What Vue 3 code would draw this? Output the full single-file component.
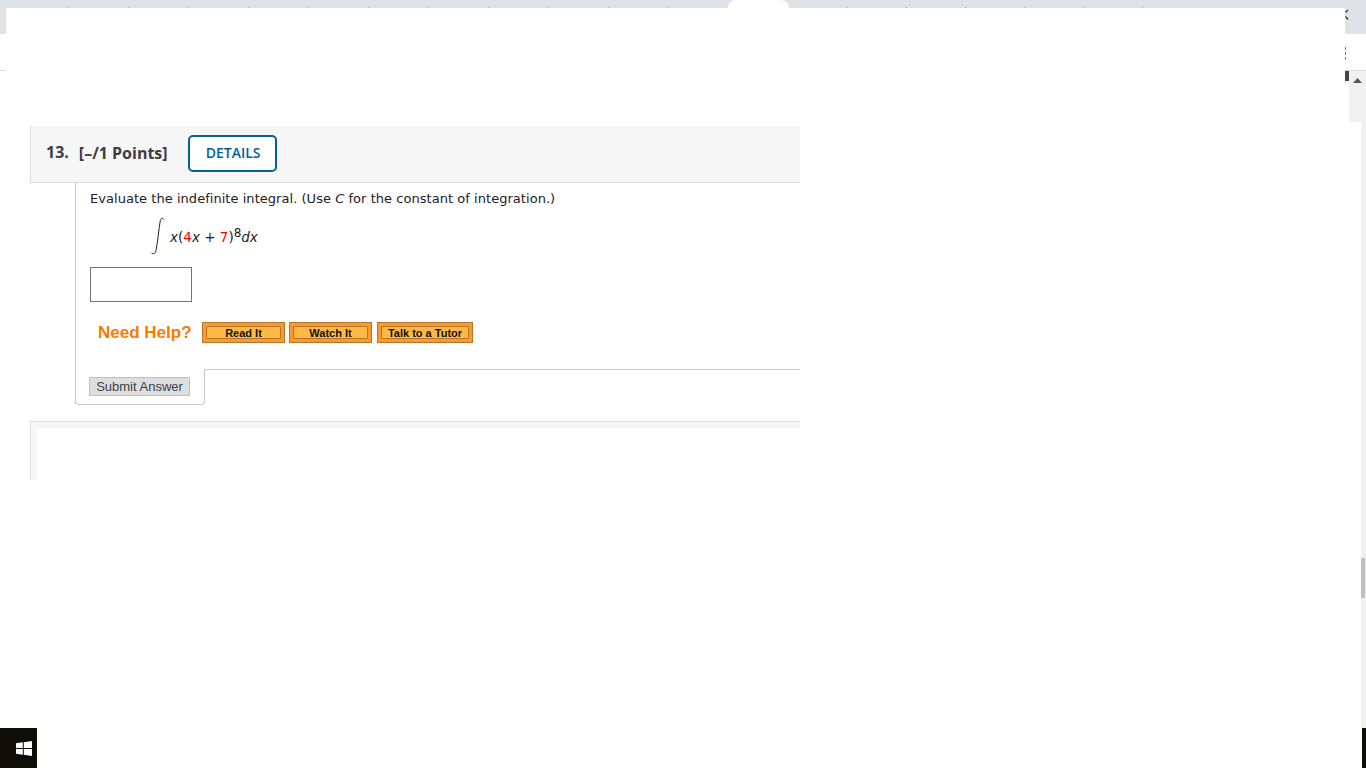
<script setup>
const leftTicks = [68, 128, 188, 248, 308, 368, 428, 488, 548, 608, 668];
const rightTicks = [847, 906, 965, 1024, 1083, 1142];
const helpButtons = [
  { label: "Read It", width: 83 },
  { label: "Watch It", width: 83 },
  { label: "Talk to a Tutor", width: 96 },
];
</script>

<template>
  <div class="screen">
    <!-- browser chrome remains -->
    <div class="tabstrip"></div>
    <div class="side-left"></div>
    <div class="side-right"></div>
    <div class="line-left"></div>
    <div class="line-right"></div>
    <div class="active-tab"></div>
    <i v-for="t in leftTicks.concat(rightTicks)" :key="t" class="tick" :style="{ left: t + 'px' }"></i>
    <svg class="close" width="4" height="12" viewBox="0 0 4 12">
      <path d="M3 1 L0.5 3.5 M0.5 7.5 L3 10.5" stroke="#333" stroke-width="1.3" fill="none" />
    </svg>
    <div class="dots"><i></i><i></i><i></i></div>
    <div class="scroll-top">
      <svg width="9" height="5" viewBox="0 0 9 5"><path d="M4.5 0 L9 5 H0 Z" fill="#555" /></svg>
    </div>
    <div class="scroll-dark"></div>
    <div class="scroll-side"><div class="scroll-thumb"></div></div>

    <!-- question -->
    <main class="content">
      <header class="q-head">
        <span class="q-num">13.</span>
        <span class="q-points">[–/1 Points]</span>
        <button class="details">DETAILS</button>
      </header>

      <section class="q-body">
        <p class="prompt">Evaluate the indefinite integral. (Use <em>C</em> for the constant of integration.)</p>
        <div class="formula">
          <svg class="integral" width="14" height="38" viewBox="0 0 14 38">
            <path d="M13 2.5 C11.5 0.5 10 1 9.3 3.5 C7.8 12 6.8 25 5 33.5 C4.4 36.5 2.5 37.5 0.5 36" fill="none" stroke="#222" stroke-width="1" />
          </svg>
          <span class="math"><em>x</em>(<b>4</b><em>x</em> + <b>7</b>)<sup>8</sup><em>dx</em></span>
        </div>
        <input class="answer" type="text" />
        <div class="help">
          <span class="help-label">Need Help?</span>
          <button v-for="b in helpButtons" :key="b.label" class="help-btn" :style="{ width: b.width + 'px' }">
            <span>{{ b.label }}</span>
          </button>
        </div>
        <div class="submit-tab">
          <button class="submit">Submit Answer</button>
        </div>
      </section>

      <div class="next-card"><div class="next-inner"></div></div>
    </main>

    <!-- taskbar pieces -->
    <div class="start">
      <svg width="16" height="15" viewBox="0 0 16 15">
        <path d="M0 2.2 L6.8 1.3 V7 H0 Z M7.8 1.2 L16 0 V7 H7.8 Z M0 8 H6.8 V13.7 L0 12.8 Z M7.8 8 H16 V15 L7.8 13.8 Z" fill="#fff" />
      </svg>
    </div>
    <div class="task-right"></div>
  </div>
</template>

<style>
html,
body {
  margin: 0;
  background: #fff;
  overflow: hidden;
}
</style>

<style scoped>
.screen {
  position: relative;
  width: 1366px;
  height: 768px;
  overflow: hidden;
  background: #fff;
}

.tabstrip {
  position: absolute;
  left: 0;
  top: 0;
  width: 1366px;
  height: 8px;
  background: #dee1e6;
}

.side-left,
.side-right {
  position: absolute;
  top: 8px;
  height: 26px;
  background: #dee1e6;
}
.side-left {
  left: 0;
  width: 6px;
}
.side-right {
  left: 1345px;
  width: 21px;
}

.line-left,
.line-right {
  position: absolute;
  top: 70px;
  height: 1px;
  background: #dcdcdc;
}
.line-left {
  left: 0;
  width: 6px;
}
.line-right {
  left: 1345px;
  width: 21px;
}

.active-tab {
  position: absolute;
  left: 728px;
  top: 0;
  width: 61px;
  height: 8px;
  background: #fff;
  border-radius: 8px 8px 0 0;
}

.tick {
  position: absolute;
  top: 7px;
  width: 1px;
  height: 1px;
  background: #a5a8ad;
}

.close {
  position: absolute;
  left: 1345px;
  top: 9px;
}

.dots {
  position: absolute;
  left: 1345px;
  top: 47px;
  display: flex;
  flex-direction: column;
  gap: 2px;
}
.dots i {
  display: block;
  width: 1px;
  height: 3px;
  background: #777;
}

.scroll-top {
  position: absolute;
  left: 1349px;
  top: 71px;
  width: 17px;
  height: 51px;
  background: #f0f0f0;
  box-sizing: border-box;
  padding: 7px 0 0 4px;
}
.scroll-top svg {
  display: block;
}

.scroll-dark {
  position: absolute;
  left: 1345px;
  top: 71px;
  width: 4px;
  height: 10px;
  background: #444;
}

.scroll-side {
  position: absolute;
  left: 1361px;
  top: 122px;
  width: 5px;
  height: 606px;
  background: #f0f0f0;
}
.scroll-thumb {
  width: 4px;
  height: 40px;
  margin-top: 436px;
  background: #c1c1c1;
}

.content {
  width: 770px;
  margin-left: 30px;
  padding-top: 126px;
  font-family: "DejaVu Sans", sans-serif;
}

.q-head {
  height: 56px;
  box-sizing: content-box;
  display: flex;
  align-items: center;
  background: #f6f6f6;
  border-left: 1px solid #ddd;
  border-bottom: 1px solid #ddd;
  font-family: "Open Sans", sans-serif;
  font-weight: 700;
  color: #3d3d3d;
}
.q-num {
  margin-left: 15px;
  font-size: 16px;
  position: relative;
  top: -2px;
}
.q-points {
  margin-left: 10px;
  font-size: 16px;
  position: relative;
  top: -1px;
}
.details {
  margin: -1px 0 0 20px;
  width: 89px;
  height: 37px;
  padding: 0 0 2px 2px;
  background: #fff;
  border: 2px solid #00629b;
  border-radius: 5px;
  color: #00629b;
  font-family: "Open Sans", sans-serif;
  font-size: 14px;
  font-weight: 600;
}

.q-body {
  position: relative;
  margin-left: 45px;
  padding: 7px 0 0 14px;
  height: 221px;
  box-sizing: border-box;
  border-left: 1px solid #c8c8c8;
}

.prompt {
  margin: 0;
  font-size: 13px;
  letter-spacing: 0.04px;
  line-height: 17px;
  color: #222;
}

.formula {
  display: flex;
  align-items: flex-start;
  margin: 10px 0 0 61px;
  height: 44px;
}
.integral {
  display: block;
}
.math {
  margin: 10px 0 0 5px;
  font-size: 13.5px;
  line-height: 20px;
  color: #222;
}
.math b {
  font-weight: 400;
  color: #f00;
}
.math sup {
  font-size: 12px;
  line-height: 0;
}

.answer {
  display: block;
  width: 102px;
  height: 35px;
  margin: 6px 0 0;
  padding: 0;
  box-sizing: border-box;
  border: 1px solid #767676;
  background: #fff;
}

.help {
  display: flex;
  align-items: center;
  height: 21px;
  margin: 20px 0 0 8px;
}
.help-label {
  margin-right: 10px;
  width: 94px;
  font-family: "Liberation Sans", Arial, sans-serif;
  font-size: 17px;
  font-weight: 700;
  color: #f57c00;
  white-space: nowrap;
}
.help-btn {
  height: 21px;
  margin-right: 4px;
  padding: 3px;
  box-sizing: border-box;
  background: #fb9a2c;
  border: 1px solid #b5752c;
  display: flex;
}
.help-btn:nth-of-type(2) {
  margin-right: 5px;
}
.help-btn span {
  flex: 1;
  display: block;
  background: #ffb944;
  border: 1px solid #b5752c;
  border-radius: 1px;
  font-family: "Liberation Sans", Arial, sans-serif;
  font-size: 11px;
  font-weight: 700;
  line-height: 13px;
  color: #111;
  white-space: nowrap;
}

.submit-tab {
  position: absolute;
  left: -1px;
  bottom: -1px;
  width: 130px;
  height: 36px;
  box-sizing: border-box;
  border: 1px solid #c8c8c8;
  border-top: none;
  border-radius: 0 0 4px 4px;
  padding: 8px 0 0 13px;
}
.submit-tab::after {
  content: "";
  position: absolute;
  left: 128px;
  top: 0;
  width: 596px;
  height: 1px;
  background: #c8c8c8;
}
.submit {
  display: block;
  width: 101px;
  height: 19px;
  padding: 0;
  background: #dedede;
  border: 1px solid #c0c0c0;
  font-family: "Liberation Sans", Arial, sans-serif;
  font-size: 13px;
  line-height: 16px;
  color: #3c4048;
  white-space: nowrap;
}

.next-card {
  height: 59px;
  margin-top: 17px;
  background: #f6f6f6;
  border-top: 1px solid #ddd;
  border-left: 1px solid #ddd;
  padding: 6px 0 0 6px;
  box-sizing: border-box;
}
.next-inner {
  height: 100%;
  background: #fff;
}

.start {
  position: absolute;
  left: 0;
  top: 728px;
  width: 37px;
  height: 40px;
  background: #0f0d08;
  display: flex;
  align-items: center;
  justify-content: center;
  padding-left: 11px;
  box-sizing: border-box;
}
.task-right {
  position: absolute;
  left: 1362px;
  top: 728px;
  width: 4px;
  height: 40px;
  background: #0f0d08;
}
</style>
